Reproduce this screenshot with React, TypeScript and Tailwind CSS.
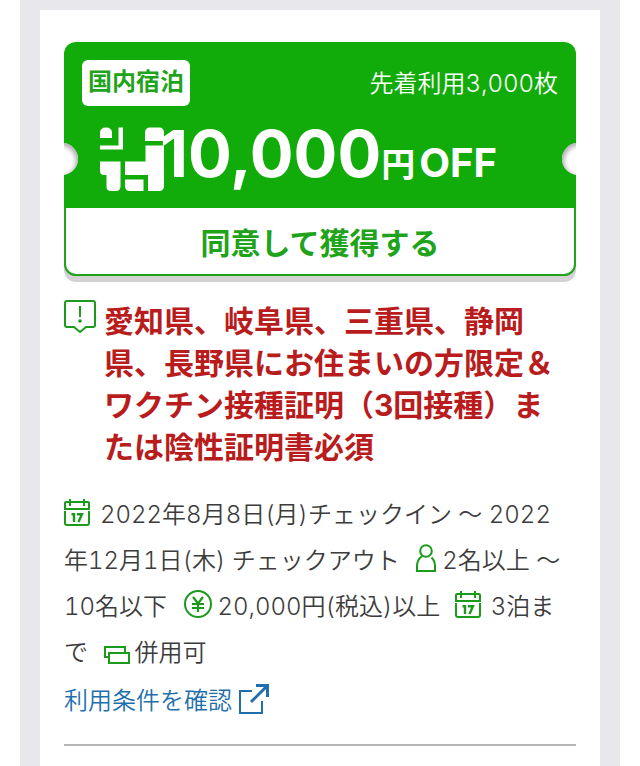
import React from "react";

const NOTICE =
  "愛知県、岐阜県、三重県、静岡県、長野県にお住まいの方限定＆ワクチン接種証明（3回接種）または陰性証明書必須";

const JapanIcon = () => (
  <svg viewBox="0 0 64 64" className="h-16 w-16 shrink-0" fill="#fff" aria-hidden="true">
    <path d="M0 11V6q0-5.500 6-5.500q6 0 6 5.500v5z" />
    <path d="M18.500 .5H23v22H0v-4h18.500z" />
    <path d="M45 14V6q0-5.500 5-5.500h9q5 0 5 5.500v8z" />
    <path d="M45.500 18.500H64V59q0 5-5 5H48V48H25V34.500h20.500z" />
    <path d="M0 34.500h20.500V59q0 5-4.500 5h-5q-4.500 0-4.500-4.500V48H4q-4 0-4-4z" />
    <path d="M25 52.500h18.500V64H30q-5 0-5-5z" />
  </svg>
);

const NoticeIcon = () => (
  <svg viewBox="0 0 32 34" className="h-[34px] w-8 shrink-0" fill="none" stroke="#1c9a1c" strokeWidth="2" aria-hidden="true">
    <path d="M3 1h26q2 0 2 2v22q0 2-2 2h-7l-6 5-6-5H3q-2 0-2-2V3q0-2 2-2z" strokeLinejoin="round" />
    <path d="M16 6v11" />
    <circle cx="16" cy="21" r="1.800" fill="#1c9a1c" stroke="none" />
  </svg>
);

const CalendarIcon = () => (
  <svg viewBox="0 0 26 27" className="mr-2.5 inline h-[27px] w-[26px] align-[-3px]" fill="none" stroke="#1c9a1c" strokeWidth="2" aria-hidden="true">
    <path d="M1 10V4q0-1 1-1h22q1 0 1 1v6z" />
    <path d="M1 12v12q0 2 2 2h20q2 0 2-2V12" />
    <path d="M6 0v7M20 0v7" />
    <path d="M7.500 15.200h2.500V23M13 15.200h5L14.500 23" strokeWidth="2.400" />
  </svg>
);

const PersonIcon = () => (
  <svg viewBox="0 0 20 28" className="mr-1.5 ml-2.5 inline h-7 w-5 align-[-3px]" fill="none" stroke="#1c9a1c" strokeWidth="2" aria-hidden="true">
    <circle cx="10" cy="7" r="5.800" />
    <path d="M6 12Q1 16 1 22v5h18v-5q0-5-3.500-8.500" />
  </svg>
);

const YenIcon = () => (
  <svg viewBox="0 0 28 28" className="mr-1.5 ml-2.5 inline h-7 w-7 align-[-3px]" fill="none" stroke="#1c9a1c" strokeWidth="2" aria-hidden="true">
    <circle cx="14" cy="14" r="13" />
    <path d="M9 7l5 6.500 5-6.500M14 13v9M8 14h12M8 18h12" strokeWidth="2.200" />
  </svg>
);

const CombineIcon = () => (
  <svg viewBox="0 0 26 18" className="mr-1 ml-2.5 inline h-[18px] w-[26px] align-[-3px]" fill="none" stroke="#1c9a1c" strokeWidth="2" aria-hidden="true">
    <path d="M5 11H1V1h20v6" />
    <rect x="5" y="7" width="20" height="10" />
  </svg>
);

const ExternalIcon = () => (
  <svg viewBox="0 0 30 30" className="inline h-[30px] w-[30px] align-[-5px]" fill="none" stroke="#1f6fae" aria-hidden="true">
    <path d="M13 7H1v22h22V17" strokeWidth="2" />
    <path d="M12 18L28 2" strokeWidth="3" />
    <path d="M17 1.500h11.500V13" strokeWidth="3" />
  </svg>
);

const Coupon = () => (
  <div className="overflow-hidden rounded-xl bg-[#12ac0a] shadow-[0_6px_0_#d3d1d2]">
    <div className="relative h-[166px] px-[18px] pt-[18px]">
      <div className="flex items-start justify-between">
        <span className="h-[46px] rounded-md bg-white px-1.5 text-2xl leading-[44px] font-bold text-[#1fa31b]">
          国内宿泊
        </span>
        <span className="text-2xl leading-[48px] font-[350] text-white tabular-nums">先着利用3,000枚</span>
      </div>
      <div className="mt-[19px] ml-[18px] flex items-start text-white">
        <JapanIcon />
        <p className="-ml-1 flex items-baseline leading-[54px] font-bold">
          <span className="text-[65px]">10,000</span>
          <span className="text-[34px]">円</span>
          <span className="ml-1 text-[40px]">OFF</span>
        </p>
      </div>
      {/* チケットの切り欠き */}
      <span className="absolute top-[101px] -left-[18px] size-8 rounded-full bg-white shadow-[inset_-2px_2px_5px_#aaa]" />
      <span className="absolute top-[101px] -right-[18px] size-8 rounded-full bg-white shadow-[inset_2px_2px_5px_#aaa]" />
    </div>
    <button
      type="button"
      className="block w-full rounded-b-xl border-2 border-t-0 border-[#1fa31b] bg-white pt-1 text-center text-[30px] leading-[62px] font-bold text-[#1fa31b]"
    >
      同意して獲得する
    </button>
  </div>
);

export default function App() {
  return (
    <div className="min-h-screen bg-white px-5 font-['Inter','Noto_Sans_CJK_JP',sans-serif]" lang="ja">
      <div className="min-h-screen bg-[#e8e7ec] px-5 pt-2.5">
        <main className="min-h-[756px] bg-white px-6 pt-8">
          <Coupon />

          <div className="mt-6 flex gap-2 pr-2">
            <NoticeIcon />
            <h2 className="text-[30px] leading-[42px] font-bold text-[#b81c1c]">{NOTICE}</h2>
          </div>

          {/* 利用条件 */}
          <p className="mt-6 pr-2 text-2xl leading-[46px] font-[350] text-[#3c3c3c] tabular-nums">
            <CalendarIcon />
            2022年8月8日(月)チェックイン 〜 2022年12月1日(木) チェックアウト <PersonIcon />
            2名以上 〜 10名以下 <YenIcon />
            20,000円(税込)以上{" "}
            <span className="ml-2">
              <CalendarIcon />
              3泊まで
            </span>{" "}
            <CombineIcon />
            併用可
          </p>
          <a href="#" className="mt-0.5 block text-2xl leading-[46px] font-[350] text-[#1f6fae]">
            利用条件を確認 <ExternalIcon />
          </a>

          <hr className="mt-5 border-t-2 border-[#b5b5b5]" />
        </main>
      </div>
    </div>
  );
}
